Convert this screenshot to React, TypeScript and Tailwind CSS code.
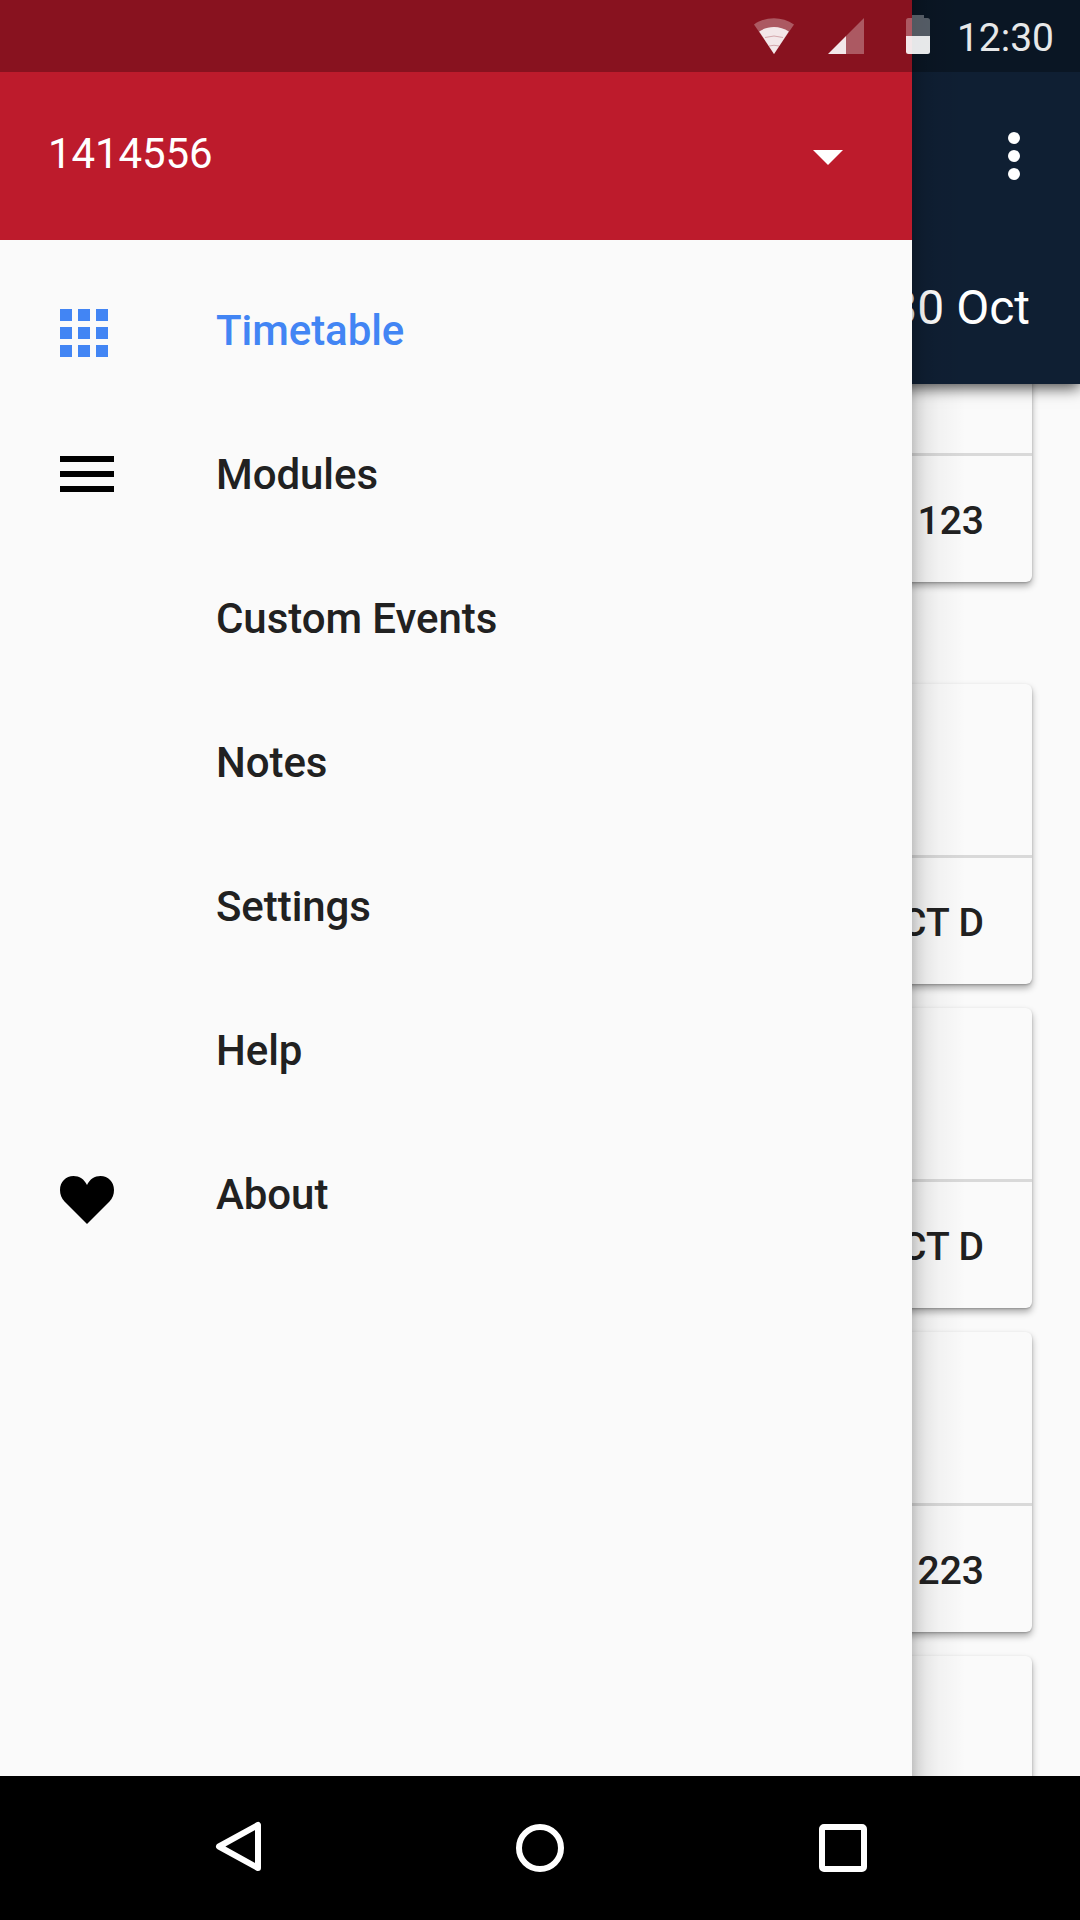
import React from "react";

const GridIcon = () => (
  <div className="mt-1.5 grid w-12 grid-cols-3 gap-1.5">
    {Array.from({ length: 9 }, (_, i) => (
      <span key={i} className="size-3 bg-[#4285f4]" />
    ))}
  </div>
);

const ListIcon = () => (
  <div className="flex w-[54px] flex-col gap-[9px]">
    <span className="h-1.5 bg-black" />
    <span className="h-1.5 bg-black" />
    <span className="h-1.5 bg-black" />
  </div>
);

const HeartIcon = () => (
  <svg className="mt-[11px] h-12 w-[54px]" viewBox="0 0 54 48">
    <path d="M27 48L4.500 25.500C1.500 22.300 0 18.400 0 14 0 5.800 5.900 0 13.500 0 19.300 0 24.300 3.200 27 9 29.700 3.200 34.700 0 40.500 0 48.100 0 54 5.800 54 14c0 4.400-1.500 8.300-4.500 11.500z" />
  </svg>
);

const items: { label: string; icon?: React.ReactNode; active?: boolean }[] = [
  { label: "Timetable", icon: <GridIcon />, active: true },
  { label: "Modules", icon: <ListIcon /> },
  { label: "Custom Events" },
  { label: "Notes" },
  { label: "Settings" },
  { label: "Help" },
  { label: "About", icon: <HeartIcon /> },
];

function Drawer() {
  return (
    <aside className="absolute inset-y-0 left-0 flex w-[912px] flex-col bg-[#fafafa]">
      <div className="h-[72px] shrink-0 bg-[#88121f]" />
      <div className="flex h-[168px] shrink-0 items-center justify-between bg-[#bd1b2c] pr-[69px] pl-12 text-[42px] leading-[48px] text-white">
        <span className="-mt-1 tracking-[-0.1px]">1414556</span>
        <svg className="mt-[3px] h-[15px] w-[30px]" viewBox="0 0 30 15">
          <path d="M0 0h30L15 15z" fill="#fff" />
        </svg>
      </div>
      <nav className="pt-[18px]">
        {items.map((item) => (
          <div key={item.label} className="flex h-36 items-center pl-[60px]">
            <div className="flex w-[156px] shrink-0">{item.icon}</div>
            <span
              className={
                item.active
                  ? "mt-0.5 text-[42px] leading-[48px] font-medium tracking-[-0.06px] text-[#4285f4]"
                  : "mt-0.5 text-[42px] leading-[48px] font-medium tracking-[-0.06px] text-[#212121]"
              }
            >
              {item.label}
            </span>
          </div>
        ))}
      </nav>
      <div className="absolute inset-y-0 left-full w-[54px] bg-[linear-gradient(to_right,rgba(0,0,0,0.22),rgba(0,0,0,0.13)_12%,rgba(0,0,0,0.07)_27%,rgba(0,0,0,0.03)_50%,rgba(0,0,0,0)_100%)]" />
    </aside>
  );
}

function Card({ room }: { room: string }) {
  return (
    <div className="flex h-[300px] shrink-0 flex-col rounded-md bg-[#fafafa] shadow-[0_4px_7px_rgba(0,0,0,0.32),0_1px_2px_rgba(0,0,0,0.2)]">
      <div className="h-[174px] border-b-[3px] border-[#d9d9d9]" />
      <div className="flex h-[126px] items-center justify-end pt-1 pr-12 text-[39px] leading-[46px] font-medium text-[#212121]">
        {room}
      </div>
    </div>
  );
}

function StatusIcons() {
  return (
    <div className="absolute inset-x-0 top-0 flex h-[72px] items-center justify-end pr-[26px]">
      <svg className="h-[72px] w-10" viewBox="0 0 40 72">
        <path d="M20 54L0 24.500C12 16 28 16 40 24.500z" fill="#fff" fillOpacity=".3" />
        <path d="M20 54L5.200 31.500C14 25.500 26 25.500 34.800 31.500z" fill="#fff" fillOpacity=".86" />
        <path d="M11 37.500q9-3 18 0M15 46q5-1.500 10 0" fill="none" stroke="#88121f" strokeOpacity=".3" />
      </svg>
      <svg className="ml-[34px] h-9 w-9" viewBox="0 0 36 36">
        <path d="M36 0v36H18V18z" fill="#fff" fillOpacity=".3" />
        <path d="M18 18v18H0z" fill="#fff" fillOpacity=".9" />
      </svg>
      <svg className="-mt-[3px] ml-[42px] h-[39px] w-6" viewBox="0 0 24 39">
        <path d="M6 0h12v3h3.500Q24 3 24 5.500V21H0V5.500Q0 3 2.500 3H6z" fill="#fff" fillOpacity=".3" />
        <path d="M0 21h24v15.500q0 2.500-2.500 2.500h-19Q0 39 0 36.500z" fill="#fff" fillOpacity=".9" />
      </svg>
      <span className="mt-1 ml-[27px] text-[39px] leading-[46px] text-[#e7e8e9]">12:30</span>
    </div>
  );
}

export default function App() {
  return (
    <div className="relative flex h-[1920px] w-[1080px] flex-col overflow-hidden bg-[#fafafa] font-['Roboto',sans-serif]">
      <div className="relative h-[1776px] shrink-0 overflow-hidden">
        <header className="relative z-10 flex h-96 flex-col bg-[#0f1f33] text-white shadow-[0_4px_14px_rgba(0,0,0,0.7)]">
          <div className="h-[72px] bg-[#0a1624]" />
          <div className="flex h-[168px] items-center justify-end pr-[60px]">
            <div className="flex flex-col gap-1.5">
              <span className="size-3 rounded-full bg-white" />
              <span className="size-3 rounded-full bg-white" />
              <span className="size-3 rounded-full bg-white" />
            </div>
          </div>
          <div className="flex justify-end pt-10 pr-[50px] text-[48px] leading-[56px]">30 Oct</div>
        </header>
        <main className="-mt-[102px] flex flex-col gap-6 pr-12 pl-12">
          <Card room="123" />
          <div className="h-[54px] shrink-0" />
          <Card room="CT D" />
          <Card room="CT D" />
          <Card room="223" />
          <Card room="" />
        </main>
        <div className="absolute inset-0 z-20">
          <Drawer />
          <StatusIcons />
        </div>
      </div>
      <footer className="flex h-36 shrink-0 items-center bg-black pl-[215px]">
        <svg className="-mt-[3px] h-[51px] w-[46px]" viewBox="0 0 46 51">
          <path d="M43 4v43L4 25.500z" fill="none" stroke="#fff" strokeWidth="6" strokeLinejoin="round" />
        </svg>
        <span className="ml-[255px] size-12 rounded-full border-6 border-white" />
        <span className="ml-[255px] size-12 rounded-[5px] border-6 border-white" />
      </footer>
    </div>
  );
}
